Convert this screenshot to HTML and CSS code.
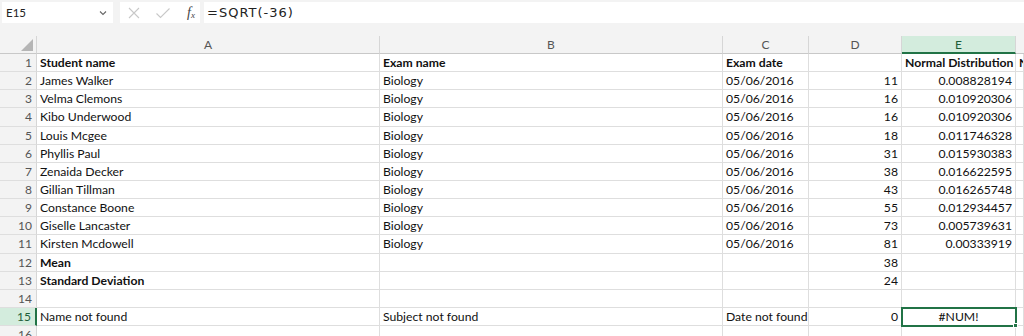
FILE: index.html
```html
<!DOCTYPE html>
<html>
<head>
<meta charset="utf-8">
<link rel="stylesheet" href="styles.css">
</head>
<body>
<div class="app">
  <div class="toolbar">
    <div class="namebox"><span>E15</span>
      <svg class="chev" width="8" height="6" viewBox="0 0 8 6"><path d="M1 1.5 L4 4.5 L7 1.5" fill="none" stroke="#666" stroke-width="1.1"/></svg>
    </div>
    <div class="fxbox">
      <svg class="ico" width="14" height="14" viewBox="0 0 14 14"><path d="M2 2 L12 12 M12 2 L2 12" stroke="#c8c8c8" stroke-width="1.1" fill="none"/></svg>
      <svg class="ico" width="16" height="14" viewBox="0 0 16 14"><path d="M1.5 7.5 L5.5 11.5 L14.5 2.5" stroke="#c8c8c8" stroke-width="1.1" fill="none"/></svg>
      <span class="fx">f<sub>x</sub></span>
    </div>
    <div class="formula">=SQRT(-36)</div>
  </div>
  <div class="sheet">
    <div class="corner"><span class="tri"></span></div>
    <div class="ch">A</div><div class="ch">B</div><div class="ch">C</div><div class="ch">D</div><div class="ch sel">E</div><div class="ch last"></div>

    <div class="rh">1</div><div class="c b">Student name</div><div class="c b">Exam name</div><div class="c b">Exam date</div><div class="c"></div><div class="c b">Normal Distribution</div><div class="c b">N</div>
    <div class="rh">2</div><div class="c">James Walker</div><div class="c">Biology</div><div class="c">05/06/2016</div><div class="c r">11</div><div class="c r">0.008828194</div><div class="c"></div>
    <div class="rh">3</div><div class="c">Velma Clemons</div><div class="c">Biology</div><div class="c">05/06/2016</div><div class="c r">16</div><div class="c r">0.010920306</div><div class="c"></div>
    <div class="rh">4</div><div class="c">Kibo Underwood</div><div class="c">Biology</div><div class="c">05/06/2016</div><div class="c r">16</div><div class="c r">0.010920306</div><div class="c"></div>
    <div class="rh">5</div><div class="c">Louis Mcgee</div><div class="c">Biology</div><div class="c">05/06/2016</div><div class="c r">18</div><div class="c r">0.011746328</div><div class="c"></div>
    <div class="rh">6</div><div class="c">Phyllis Paul</div><div class="c">Biology</div><div class="c">05/06/2016</div><div class="c r">31</div><div class="c r">0.015930383</div><div class="c"></div>
    <div class="rh">7</div><div class="c">Zenaida Decker</div><div class="c">Biology</div><div class="c">05/06/2016</div><div class="c r">38</div><div class="c r">0.016622595</div><div class="c"></div>
    <div class="rh">8</div><div class="c">Gillian Tillman</div><div class="c">Biology</div><div class="c">05/06/2016</div><div class="c r">43</div><div class="c r">0.016265748</div><div class="c"></div>
    <div class="rh">9</div><div class="c">Constance Boone</div><div class="c">Biology</div><div class="c">05/06/2016</div><div class="c r">55</div><div class="c r">0.012934457</div><div class="c"></div>
    <div class="rh">10</div><div class="c">Giselle Lancaster</div><div class="c">Biology</div><div class="c">05/06/2016</div><div class="c r">73</div><div class="c r">0.005739631</div><div class="c"></div>
    <div class="rh">11</div><div class="c">Kirsten Mcdowell</div><div class="c">Biology</div><div class="c">05/06/2016</div><div class="c r">81</div><div class="c r">0.00333919</div><div class="c"></div>
    <div class="rh">12</div><div class="c b">Mean</div><div class="c"></div><div class="c"></div><div class="c r">38</div><div class="c"></div><div class="c"></div>
    <div class="rh">13</div><div class="c b">Standard Deviation</div><div class="c"></div><div class="c"></div><div class="c r">24</div><div class="c"></div><div class="c"></div>
    <div class="rh">14</div><div class="c"></div><div class="c"></div><div class="c"></div><div class="c"></div><div class="c"></div><div class="c"></div>
    <div class="rh selrow">15</div><div class="c">Name not found</div><div class="c">Subject not found</div><div class="c">Date not found</div><div class="c r">0</div><div class="c ctr active">#NUM!<span class="handle"></span></div><div class="c"></div>
    <div class="rh">16</div><div class="c"></div><div class="c"></div><div class="c"></div><div class="c"></div><div class="c"></div><div class="c"></div>
  </div>
</div>
</body>
</html>
```

FILE: styles.css
```css
* { box-sizing: border-box; }
html, body { margin: 0; padding: 0; }
body {
  width: 1024px;
  height: 336px;
  overflow: hidden;
  background: #f3f3f3;
  font-family: Lato, "Liberation Sans", sans-serif;
}
.app { display: flex; flex-direction: column; }
.toolbar {
  display: flex;
  align-items: stretch;
  height: 36px;
  padding: 2px 0 13px 2px;
  gap: 7px;
  background: #f3f3f3;
}
.namebox {
  width: 111px;
  background: #fff;
  display: flex;
  align-items: center;
  justify-content: space-between;
  padding: 0 6px 0 4px;
  font-size: 11.5px;
  color: #222;
}
.chev { margin-top: 1px; }
.fxbox {
  width: 80px;
  background: #fff;
  display: flex;
  align-items: center;
  padding-left: 7px;
  gap: 14px;
}
.fx {
  font-family: "Liberation Serif", serif;
  font-style: italic;
  font-size: 14px;
  color: #444;
  margin-left: 2px;
}
.fx sub { font-size: 9px; vertical-align: -1px; }
.formula {
  flex: 1;
  background: #fff;
  margin-left: -3px;
  display: flex;
  align-items: center;
  padding-left: 3px;
  font-family: "DejaVu Sans", sans-serif;
  font-size: 13px;
  letter-spacing: 1px;
  color: #222;
}
.sheet {
  display: grid;
  grid-template-columns: 37px 343px 343px 86px 93px 114px 1fr;
  grid-template-rows: 18px repeat(16, 18.15px);
  background: #fff;
  font-size: 12.2px;
  color: #111;
}
.corner {
  background: #f3f3f3;
  border-right: 1px solid #d6d6d6;
  border-bottom: 1px solid #c8c8c8;
  position: relative;
}
.tri {
  position: absolute;
  right: 3px;
  bottom: 2px;
  width: 0; height: 0;
  border-left: 12px solid transparent;
  border-bottom: 12px solid #b5b5b5;
}
.ch {
  background: #f3f3f3;
  border-right: 1px solid #d6d6d6;
  border-bottom: 1px solid #c8c8c8;
  color: #555;
  text-align: center;
  font-size: 12px;
  line-height: 17px;
}
.ch.sel {
  background: #d3ecdd;
  color: #1e5e3a;
  border-bottom: 2px solid #217346;
}
.ch.last { border-right: none; }
.rh {
  background: #f3f3f3;
  border-right: 1px solid #d6d6d6;
  border-bottom: 1px solid #dedede;
  color: #555;
  text-align: right;
  padding-right: 4px;
  font-size: 12px;
  line-height: 18px;
}
.rh.selrow {
  background: #d3ecdd;
  color: #1e5e3a;
  border-right: 2px solid #217346;
}
.c {
  border-right: 1px solid #dedede;
  border-bottom: 1px solid #dedede;
  padding: 0 3px;
  line-height: 18px;
  white-space: nowrap;
  overflow: hidden;
}
.c.b { font-weight: bold; }
.c.r { text-align: right; }
.c.ctr { text-align: center; }
.active {
  position: relative;
  overflow: visible;
  outline: 2px solid #217346;
  outline-offset: -1px;
}
.handle {
  position: absolute;
  right: -3px;
  bottom: -3px;
  width: 5px;
  height: 5px;
  background: #217346;
  border: 1px solid #fff;
}
```
